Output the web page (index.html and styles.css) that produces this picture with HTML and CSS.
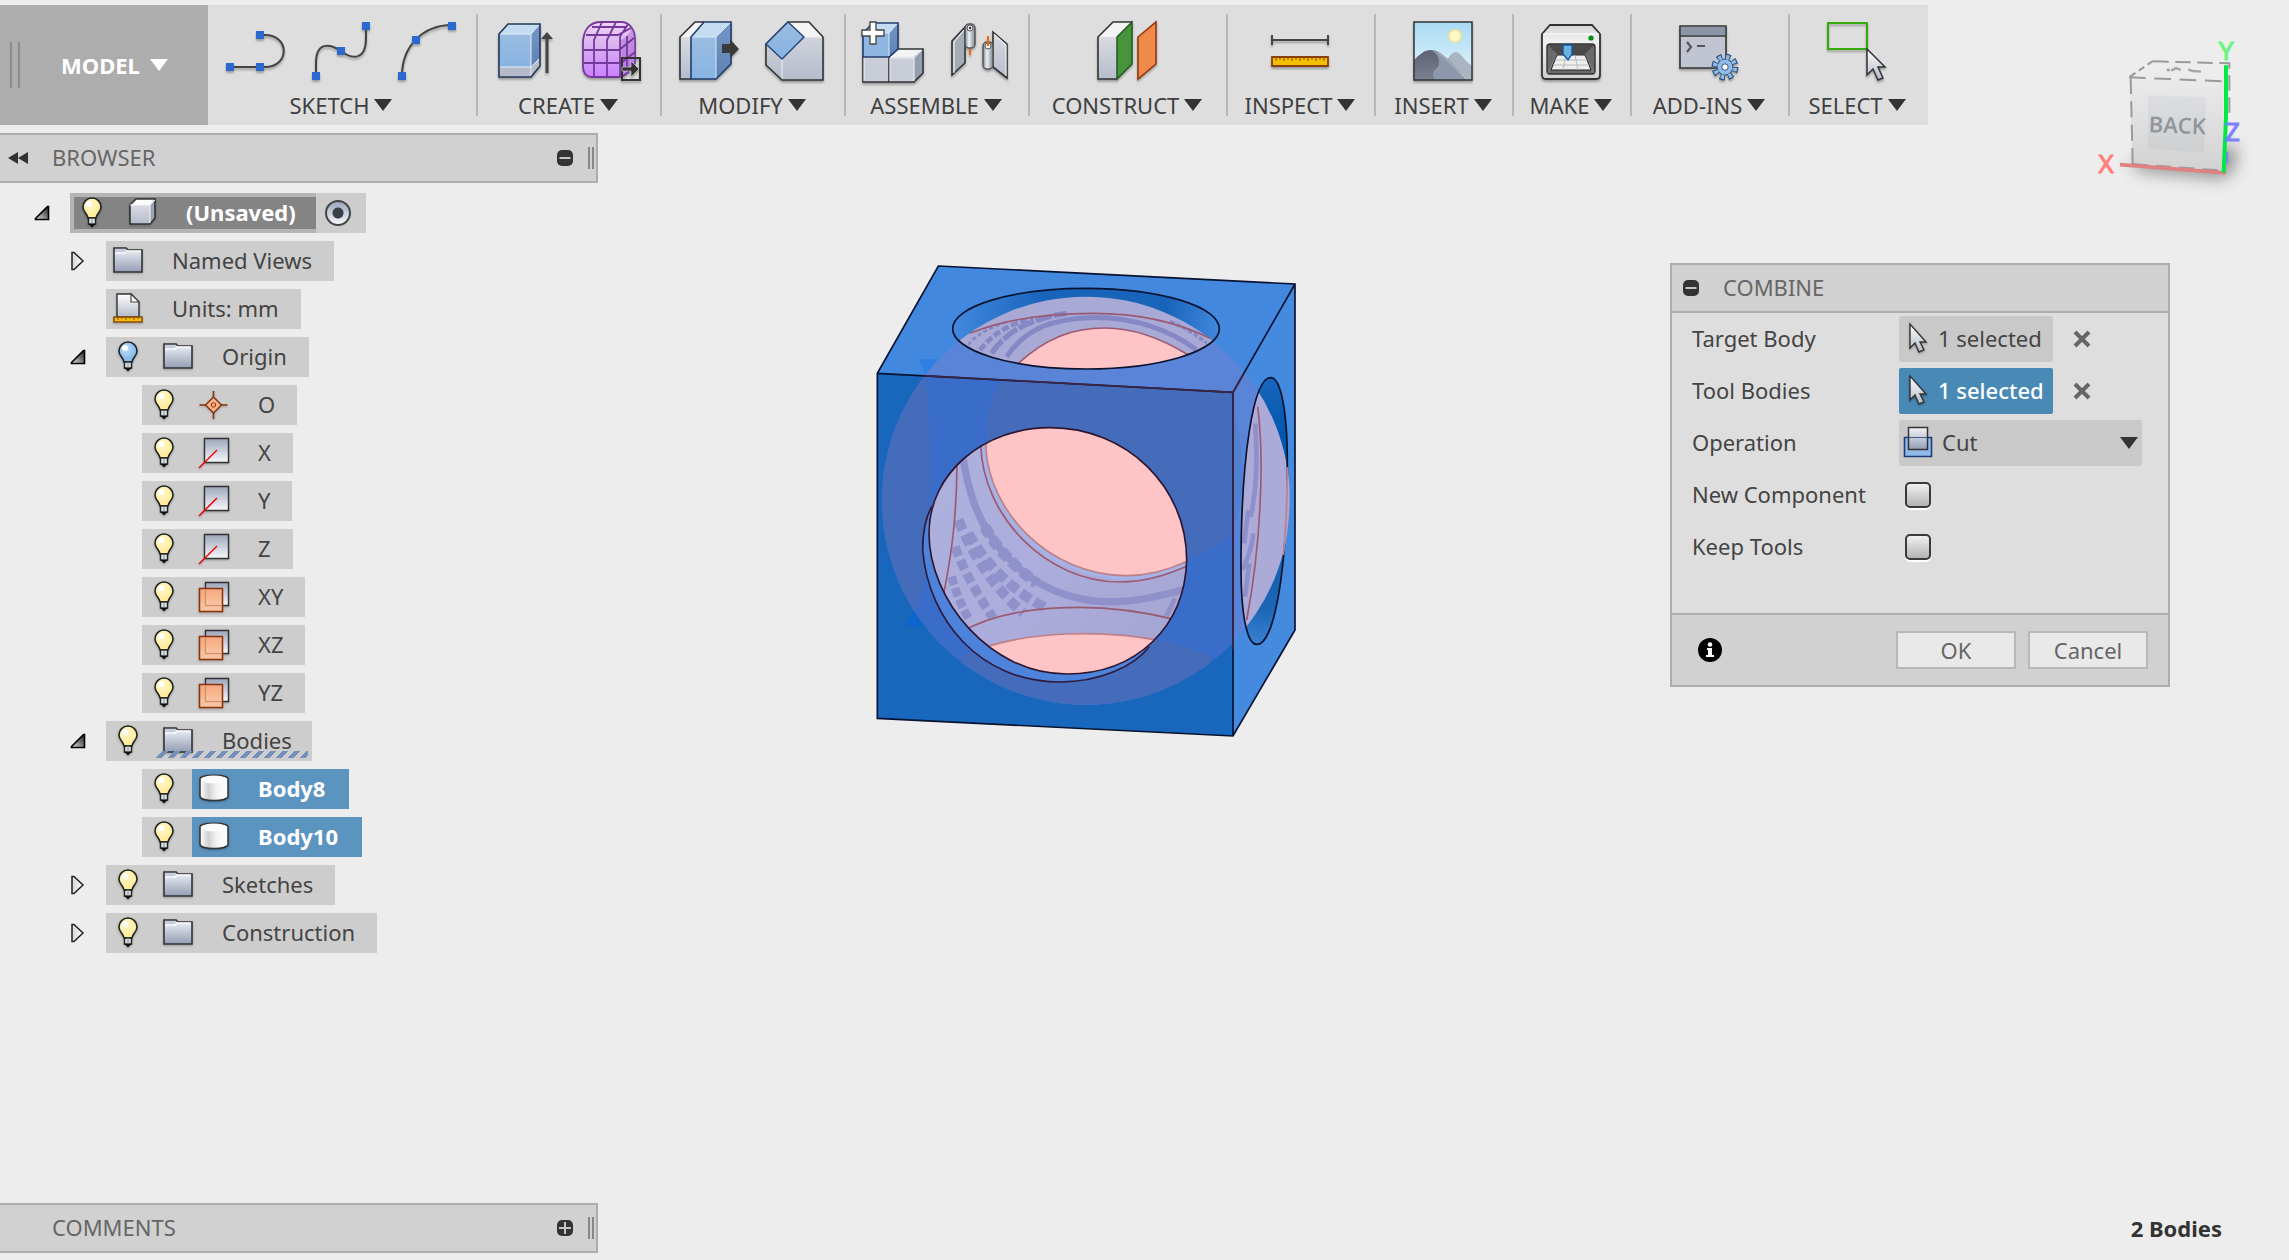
FILE: index.html
```html
<!DOCTYPE html>
<html lang="en">
<head>
  <meta charset="UTF-8" />
  <meta name="viewport" content="width=device-width, initial-scale=1" />
  <title>Combine</title>
  <link rel="stylesheet" href="styles.css">
</head>
<body>
  <!-- shared icons -->
  <svg class="defs" aria-hidden="true">
    <defs>
      <linearGradient id="gSteel" x1="0" y1="0" x2="0" y2="1"><stop offset="0" stop-color="#f2f4f8"/><stop offset="1" stop-color="#939db5"/></linearGradient>
      <linearGradient id="gSteelUp" x1="0" y1="0" x2="0" y2="1"><stop offset="0" stop-color="#9ba5ba"/><stop offset="1" stop-color="#f8f9fc"/></linearGradient>
      <linearGradient id="gCursor" x1="0" y1="0" x2="0" y2="1"><stop offset="0" stop-color="#ffffff"/><stop offset="1" stop-color="#b4bac8"/></linearGradient>
      <linearGradient id="gFront" x1="0" y1="0" x2="0" y2="1"><stop offset="0" stop-color="#d9dbe1"/><stop offset="1" stop-color="#b6bccd"/></linearGradient>
      <linearGradient id="gBlue" x1="0" y1="0" x2="0" y2="1"><stop offset="0" stop-color="#9abde0"/><stop offset="1" stop-color="#87b3e2"/></linearGradient>
      <linearGradient id="gBlueSide" x1="0" y1="0" x2="0" y2="1"><stop offset="0" stop-color="#7597c8"/><stop offset="1" stop-color="#5c81b4"/></linearGradient>
      <linearGradient id="gOrange" x1="0" y1="0" x2="0" y2="1"><stop offset="0" stop-color="#f9a678"/><stop offset="1" stop-color="#fccaa8"/></linearGradient>
      <linearGradient id="gCyl" x1="0" y1="0" x2="1" y2="0"><stop offset="0" stop-color="#ffffff"/><stop offset=".3" stop-color="#cfd0d4"/><stop offset=".6" stop-color="#f4f4f5"/><stop offset="1" stop-color="#ffffff"/></linearGradient>
      <linearGradient id="gPin" x1="0" y1="0" x2="1" y2="0"><stop offset="0" stop-color="#7d8792"/><stop offset=".4" stop-color="#f0f2f5"/><stop offset="1" stop-color="#7d8792"/></linearGradient>
      <linearGradient id="gPurple" x1="0" y1="0" x2="0" y2="1"><stop offset="0" stop-color="#f0d4fb"/><stop offset=".4" stop-color="#d9b4ee"/><stop offset="1" stop-color="#cb80ff"/></linearGradient>
      <linearGradient id="gSky" x1="0" y1="0" x2="0" y2="1"><stop offset="0" stop-color="#a8daf2"/><stop offset="1" stop-color="#e6f6fc"/></linearGradient>
      <linearGradient id="gRock" x1="0" y1="0" x2="0" y2="1"><stop offset="0" stop-color="#5d6271"/><stop offset="1" stop-color="#7b8191"/></linearGradient>
      <linearGradient id="gCase" x1="0" y1="0" x2="0" y2="1"><stop offset="0" stop-color="#d5d5d5"/><stop offset=".3" stop-color="#f1f1f1"/><stop offset="1" stop-color="#cfcfcf"/></linearGradient>
      <linearGradient id="gTwist" x1="0" y1="1" x2="1" y2="0"><stop offset="0" stop-color="#e0e0e0"/><stop offset="1" stop-color="#1c1c1c"/></linearGradient>
      <linearGradient id="gTwistR" x1="0" y1="0" x2="1" y2="0"><stop offset="0" stop-color="#d4d4d4"/><stop offset="1" stop-color="#ffffff"/></linearGradient>
      <radialGradient id="gBulb" cx=".4" cy=".35" r=".7"><stop offset="0" stop-color="#fff6cf"/><stop offset=".6" stop-color="#fff0a4"/><stop offset="1" stop-color="#fde88f"/></radialGradient>
      <radialGradient id="gBulbOff" cx=".4" cy=".35" r=".7"><stop offset="0" stop-color="#c3e0fa"/><stop offset=".6" stop-color="#8fc1ee"/><stop offset="1" stop-color="#82b4e6"/></radialGradient>
    </defs>

    <symbol id="i-bulb" viewBox="0 0 44 40">
      <path d="M18 25C17 20 13 19 13 14a9 9 0 0 1 18 0c0 5-4 6-5 11z" fill="url(#gBulb)" stroke="#222" stroke-width="1.6"/>
      <circle cx="19" cy="11" r="3" fill="#fff"/>
      <path d="M18.5 25h7v6h-7z" fill="#dfe2e8" stroke="#222" stroke-width="1.4"/><path d="M22 25v6" stroke="#888"/>
      <path d="M18.5 31h7L22 34.5z" fill="#111"/>
    </symbol>
    <symbol id="i-bulb-off" viewBox="0 0 44 40">
      <path d="M18 25C17 20 13 19 13 14a9 9 0 0 1 18 0c0 5-4 6-5 11z" fill="url(#gBulbOff)" stroke="#222" stroke-width="1.6"/>
      <circle cx="19" cy="11" r="3" fill="#fff"/>
      <path d="M18.5 25h7v6h-7z" fill="#dfe2e8" stroke="#222" stroke-width="1.4"/><path d="M22 25v6" stroke="#888"/>
      <path d="M18.5 31h7L22 34.5z" fill="#111"/>
    </symbol>
    <symbol id="i-folder" viewBox="0 0 44 40">
      <path d="M8 31V7h12l2 2h14v22z" fill="url(#gSteel)" stroke="#333" stroke-width="1.6"/>
      <path d="M9 8h10l2 2-2 2H9z" fill="#c6cfe2"/><path d="M9 12h10l2-2h14" fill="none" stroke="#f9fafc" stroke-width="1.4"/>
    </symbol>
    <symbol id="i-part" viewBox="0 0 44 40">
      <path d="M10 12l6-6h19l-5 6z" fill="#fbfbfc"/><path d="M30 12l5-6v19l-5 6z" fill="#9aa5b2"/><path d="M10 12h20v19H10z" fill="url(#gFront)"/>
      <path d="M10 12l6-6h19v19l-5 6H10z" fill="none" stroke="#333" stroke-width="1.6"/><path d="M10 12h20v18M30 12l5-5" fill="none" stroke="#f4f5f8"/>
    </symbol>
    <symbol id="i-units" viewBox="0 0 44 40">
      <path d="M11 28V5h14l8 8v15z" fill="url(#gCursor)" stroke="#333" stroke-width="1.4"/><path d="M25 5v8h8z" fill="#fff" stroke="#444" stroke-width="1.2"/>
      <path d="M8 28h28v5H8z" fill="#f2bd0b" stroke="#8a4a08" stroke-width="1.5"/><path d="M12 28v3M16 28v2M20 28v3M24 28v2M28 28v3M32 28v2" stroke="#8a4a08"/>
    </symbol>
    <symbol id="i-origin" viewBox="0 0 44 40">
      <path d="M21.5 6v28M7.5 20h28" stroke="#8a3208" stroke-width="1.6"/><path d="M21.5 12l8 8-8 8-8-8z" fill="#fcb184" stroke="#7a3210" stroke-width="1.3"/>
      <circle cx="21.5" cy="20" r="2.2" fill="none" stroke="#8a3208"/>
    </symbol>
    <symbol id="i-axis" viewBox="0 0 44 40">
      <path d="M12.5 5.5h24v24h-24z" fill="url(#gSteelUp)" stroke="#333" stroke-width="1.4"/><path d="M7 35l18-18" stroke="#f00000" stroke-width="1.5"/>
    </symbol>
    <symbol id="i-plane" viewBox="0 0 44 40">
      <path d="M13.5 5.5h23v23h-23z" fill="url(#gSteelUp)" stroke="#333" stroke-width="1.4"/>
      <path d="M7.5 11.5h23v23h-23z" fill="url(#gOrange)" fill-opacity=".93" stroke="#8a3208" stroke-width="1.5"/><path d="M13.5 12v16.500H30" fill="none" stroke="#c98c66"/>
    </symbol>
    <symbol id="i-body" viewBox="0 0 44 40">
      <path d="M8 10c0-5 28-5 28 0v17c0 6-28 6-28 0z" fill="url(#gCyl)" stroke="#333" stroke-width="1.5"/><ellipse cx="22" cy="10.5" rx="13" ry="4" fill="#fafafa"/>
    </symbol>
    <symbol id="i-open" viewBox="0 0 16 16"><path d="M1.5 14.500v-1l12-12h1v13z" fill="url(#gTwist)" stroke="#000" stroke-width="1.6"/></symbol>
    <symbol id="i-closed" viewBox="0 0 16 20"><path d="M2 1.500h2l9 8.500-9 8.500H2z" fill="url(#gTwistR)" stroke="#222" stroke-width="1.5"/></symbol>
    <symbol id="i-tri" viewBox="0 0 18 12"><path d="M0 0h18L9 12z" fill="currentColor"/></symbol>
    <symbol id="i-minus" viewBox="0 0 16 16"><rect width="16" height="16" rx="5" fill="#333"/><path d="M2.5 8h11" stroke="#c4c4c4" stroke-width="2"/></symbol>
    <symbol id="i-plus" viewBox="0 0 16 16"><rect width="16" height="16" rx="5" fill="#333"/><path d="M2 8h12M8 2v12" stroke="#c4c4c4" stroke-width="2"/></symbol>
    <symbol id="i-cursor" viewBox="0 0 20 32">
      <path d="M2 2v24l5-5 4 9 5-2-4-8h6z" fill="url(#gCursor)" stroke="#333" stroke-width="1.4"/>
    </symbol>
    <symbol id="i-x" viewBox="0 0 18 18"><path d="M2 2l14 14M16 2L2 16" stroke="#666" stroke-width="4"/></symbol>
  </svg>

  <header class="toolbar">
    <button class="workspace"><span class="grip"></span><span>MODEL</span><svg class="tri"><use href="#i-tri"/></svg></button>

    <div class="group">
      <div class="icons">
        <button class="tool" aria-label="Line"><svg viewBox="0 0 64 64">
          <path d="M7 49H42C67 49 67 17 42 17H37" fill="none" stroke="#444" stroke-width="2"/>
          <path d="M3 45h8v8H3zM33 45h8v8h-8zM33 13h8v8h-8z" fill="#2b68d0"/></svg></button>
        <button class="tool" aria-label="Spline"><svg viewBox="0 0 64 64">
          <path d="M7 58V45C7 24 20 25 32 33C44 42 57 42 57 20V8" fill="none" stroke="#444" stroke-width="2"/>
          <path d="M3 54h8v8H3zM28 29h8v8h-8zM53 4h8v8h-8z" fill="#2b68d0"/></svg></button>
        <button class="tool" aria-label="Arc"><svg viewBox="0 0 64 64">
          <path d="M7 58C7 28 28 7 57 7" fill="none" stroke="#444" stroke-width="2"/>
          <path d="M3 54h8v8H3zM17 18h8v8h-8zM53 4h8v8h-8z" fill="#2b68d0"/></svg></button>
      </div>
      <button class="menu">SKETCH<svg class="tri"><use href="#i-tri"/></svg></button>
    </div>

    <div class="group">
      <div class="icons">
        <button class="tool" aria-label="Extrude"><svg viewBox="0 0 64 64">
          <path d="M6 16L15 6h32l-9 10z" fill="#c3dcf2"/><path d="M38 16l9-10v35l-9 10z" fill="url(#gBlueSide)"/><path d="M6 16h32v33H6z" fill="url(#gBlue)"/>
          <path d="M6 49h32v10H6z" fill="#b4bac9"/><path d="M38 49l9-9v8l-9 11z" fill="#b9bdc6"/>
          <path d="M6 49h32l9-9M7 16h31v43M38 16l8-9" fill="none" stroke="#e4eef9"/>
          <path d="M6 16L15 6h32v42l-9 11H6z" fill="none" stroke="#24385c" stroke-width="1.6"/>
          <path d="M54 55V19" stroke="#444" stroke-width="3"/><path d="M48 21l6-7 6 7z" fill="#444"/></svg></button>
        <button class="tool" aria-label="Create form"><svg viewBox="0 0 64 64">
          <path d="M4 26C4 10 12 4 22 4h20c9 0 14 8 14 18v22c0 4-10 15-16 15H14C6 59 4 54 4 48z" fill="url(#gPurple)" stroke="#75399b" stroke-width="1.8"/>
          <path d="M42 22c4-2 9-7 11-12 3 4 3 8 3 14v20c0 4-6 9-13 12z" fill="#a45ccc" opacity=".45"/>
          <path d="M4 32h36l15-12M4 45h38l14-11M7 17h32l13-7M15 58V22L23 4M28 59V22L37 4M41 58V20c0-3 5-8 8-14M48 52V18M13 9h34" fill="none" stroke="#75399b" stroke-width="1.8"/>
          <path d="M43 40h18v22H43z" fill="none" stroke="#333" stroke-width="2"/><path d="M43 49h9v-6l8 8-8 8v-6h-9z" fill="#333" stroke="#ddd" stroke-width=".6"/></svg></button>
      </div>
      <button class="menu">CREATE<svg class="tri"><use href="#i-tri"/></svg></button>
    </div>

    <div class="group">
      <div class="icons">
        <button class="tool" aria-label="Press pull"><svg viewBox="0 0 64 64">
          <path d="M3 19L18 4h9L14 19z" fill="#f4f4f6"/><path d="M3 19h11v42H3z" fill="url(#gFront)"/>
          <path d="M14 19L27 4h27L39 19z" fill="#c3dcf2"/><path d="M14 19h25v42H14z" fill="url(#gBlue)"/><path d="M39 19L54 4v42L39 61z" fill="url(#gBlueSide)"/>
          <path d="M15 19h24v41M39 19L53 5" fill="none" stroke="#d7e8f8"/>
          <path d="M14 61H3V19L18 4h9" fill="none" stroke="#333" stroke-width="1.6"/><path d="M14 61V19L27 4h27v42L39 61z" fill="none" stroke="#1f3d6e" stroke-width="1.6"/>
          <path d="M45 26h8v-5l9 10-9 9v-5h-8z" fill="#3a3a3a"/></svg></button>
        <button class="tool" aria-label="Chamfer"><svg viewBox="0 0 64 64">
          <path d="M25 4h21l14 15v43H19L3 47V26z" fill="url(#gFront)"/><path d="M25 4h21l14 15H41z" fill="#f4f4f6"/>
          <path d="M19 41v20M41 19h18" stroke="#f0f1f5"/>
          <path d="M25 4h21l14 15v43H19L3 47V26z" fill="none" stroke="#333" stroke-width="1.6"/><path d="M25 4l16 15-22 22L3 26z" fill="url(#gBlue)" stroke="#24467c" stroke-width="1.4"/></svg></button>
      </div>
      <button class="menu">MODIFY<svg class="tri"><use href="#i-tri"/></svg></button>
    </div>

    <div class="group">
      <div class="icons">
        <button class="tool" aria-label="New component"><svg viewBox="0 0 64 64">
          <path d="M28 39l9-8h25l-9 8z" fill="#f4f4f6"/><path d="M2 39h51v25H2z" fill="#c9cdd8"/><path d="M53 39l9-8v24l-9 9z" fill="#94a0ae"/>
          <path d="M28 39l9-8h25v24l-9 9H2V39M28 39v25" fill="none" stroke="#333" stroke-width="1.6"/><path d="M29 40h24v23M53 40l8-8M3 40v23M29 40v23" fill="none" stroke="#f2f3f6"/>
          <path d="M2 15L12 5h25L28 15z" fill="#c3dcf2"/><path d="M28 15l9-10v26l-9 8z" fill="url(#gBlueSide)"/><path d="M2 15h26v24H2z" fill="#90b7e4"/>
          <path d="M2 39V15L12 5h25v26l-9 8z" fill="none" stroke="#1f3d6e" stroke-width="1.6"/><path d="M3 15h25v23M28 15l8-9" fill="none" stroke="#d7e8f8"/>
          <path d="M9 4h6v8h8v6h-8v8H9v-8H1v-6h8z" fill="#fff" stroke="#444" stroke-width="1.3"/></svg></button>
        <button class="tool" aria-label="Joint"><svg viewBox="0 0 64 64">
          <path d="M5 57V23L18 9v36z" fill="#a3adb8" stroke="#333" stroke-width="1.6"/><path d="M7 55V24L17 12" fill="none" stroke="#fff"/>
          <path d="M23 30v7" stroke="#f56a00" stroke-width="2"/><rect x="18" y="6" width="10" height="24" rx="4" fill="url(#gPin)" stroke="#555" stroke-width="1.4"/><circle cx="23" cy="10" r="3" fill="#eee" stroke="#555"/><circle cx="23" cy="10" r="1.2" fill="#333"/>
          <path d="M46 14l14 12v34L46 49z" fill="url(#gFront)" stroke="#333" stroke-width="1.6"/><path d="M47 16l12 11v31" fill="none" stroke="#fff"/>
          <rect x="36" y="24" width="10" height="27" rx="4" fill="url(#gPin)" stroke="#555" stroke-width="1.4"/><circle cx="41" cy="28" r="3" fill="#eee" stroke="#555"/><path d="M41 18v10" stroke="#f56a00" stroke-width="2"/></svg></button>
      </div>
      <button class="menu">ASSEMBLE<svg class="tri"><use href="#i-tri"/></svg></button>
    </div>

    <div class="group">
      <div class="icons">
        <button class="tool" aria-label="Offset plane"><svg viewBox="0 0 64 64">
          <path d="M3 19L18 4h19L22 19z" fill="#f4f4f6"/><path d="M3 19h19v42H3z" fill="url(#gFront)"/><path d="M22 19L37 4v42L22 61z" fill="#47943c" stroke="#1f5a1c" stroke-width="1.5"/>
          <path d="M22 61H3V19L18 4h19" fill="none" stroke="#333" stroke-width="1.6"/><path d="M43 19L61 4v42L43 61z" fill="#ef8a4b" stroke="#93380d" stroke-width="1.6"/></svg></button>
      </div>
      <button class="menu">CONSTRUCT<svg class="tri"><use href="#i-tri"/></svg></button>
    </div>

    <div class="group">
      <div class="icons">
        <button class="tool" aria-label="Measure"><svg viewBox="0 0 64 64">
          <path d="M4 22h56M4 17v10M60 17v10" stroke="#444" stroke-width="2"/>
          <path d="M4 39h56v9H4z" fill="#f5c000" stroke="#8a4008" stroke-width="1.8"/><path d="M8 39v4M12 39v3M16 39v4M20 39v3M24 39v4M28 39v3M32 39v4M36 39v3M40 39v4M44 39v3M48 39v4M52 39v3M56 39v4" stroke="#8a4008"/></svg></button>
      </div>
      <button class="menu">INSPECT<svg class="tri"><use href="#i-tri"/></svg></button>
    </div>

    <div class="group">
      <div class="icons">
        <button class="tool" aria-label="Insert image"><svg viewBox="0 0 64 64">
          <path d="M3 4h58v58H3z" fill="url(#gSky)"/><circle cx="44" cy="18" r="6" fill="#fff9c8" stroke="#fbe38c" stroke-width="1.5"/>
          <path d="M34 44c5-6 7-10 11-10s8 8 16 14v14H40z" fill="#a9b5c2"/><path d="M3 42c5-5 10-10 17-10 10 0 20 12 36 30H3z" fill="url(#gRock)"/>
          <path d="M20 32c7 4 10 11 7 17-6 5-6 7-3 13h32C40 44 30 33 20 32z" fill="#8d98ac"/><path d="M28 35c9 7 19 18 28 27" fill="none" stroke="#c5c6c6"/>
          <path d="M3 4h58v58H3z" fill="none" stroke="#333" stroke-width="1.5"/></svg></button>
      </div>
      <button class="menu">INSERT<svg class="tri"><use href="#i-tri"/></svg></button>
    </div>

    <div class="group">
      <div class="icons">
        <button class="tool" aria-label="3D print"><svg viewBox="0 0 64 64">
          <path d="M3 16l8-9h42l8 9v41c0 3-1 4-4 4H7c-3 0-4-1-4-4z" fill="url(#gCase)" stroke="#333" stroke-width="1.8"/><path d="M4 16h56" stroke="#fff"/>
          <circle cx="52" cy="20" r="2.6" fill="#008a10"/><rect x="8" y="26" width="48" height="30" rx="3" fill="#6a6a6a" stroke="#333" stroke-width="1.4"/><path d="M9 27l9 9h28l9-9z" fill="#4a4a4a"/><path d="M9 55l9-19M55 55l-9-19" stroke="#888"/>
          <path d="M18 37h28l6 15H12z" fill="#eee" stroke="#222"/><path d="M16 42h32M14 47h36M27 37l-3 15M36 37l3 15" stroke="#bbb"/>
          <path d="M24 27h9v9l-4 6-5-6z" fill="#6bb3dd" stroke="#0d55a5" stroke-width="1.3"/></svg></button>
      </div>
      <button class="menu">MAKE<svg class="tri"><use href="#i-tri"/></svg></button>
    </div>

    <div class="group">
      <div class="icons">
        <button class="tool" aria-label="Scripts and add-ins"><svg viewBox="0 0 64 64">
          <path d="M3 8h46v42H3z" fill="#c1c5d2" stroke="#333" stroke-width="1.6"/><path d="M4 9h44v8H4z" fill="#8c95a5"/><path d="M3 18h46" stroke="#333" stroke-width="1.4"/>
          <path d="M10 24l4 5-4 5M20 28h8" fill="none" stroke="#555" stroke-width="2.2"/>
          <circle cx="48" cy="49" r="10.5" fill="none" stroke="#2d527f" stroke-width="6" stroke-dasharray="5 3.247"/><circle cx="48" cy="49" r="8" fill="#92bbe6" stroke="#2d527f" stroke-width="1.2"/>
          <circle cx="48" cy="49" r="10" fill="none" stroke="#92bbe6" stroke-width="4.4" stroke-dasharray="3 4.854" stroke-dashoffset="-.9"/><circle cx="48" cy="49" r="3.2" fill="#fff" stroke="#2d527f"/></svg></button>
      </div>
      <button class="menu">ADD-INS<svg class="tri"><use href="#i-tri"/></svg></button>
    </div>

    <div class="group">
      <div class="icons">
        <button class="tool" aria-label="Select"><svg viewBox="0 0 64 64">
          <path d="M3 5h39v26H3z" fill="none" stroke="#35aa0b" stroke-width="2"/>
          <path d="M42 31v26l6-6 5 11 5-2-5-11h7z" fill="url(#gCursor)" stroke="#333" stroke-width="1.5"/></svg></button>
      </div>
      <button class="menu">SELECT<svg class="tri"><use href="#i-tri"/></svg></button>
    </div>
  </header>

  <main class="workarea">
    <aside class="side">
      <div class="bar">
        <button class="collapse" aria-label="Collapse browser"><svg viewBox="0 0 20 12"><path d="M10 0v12L0 6zM20 0v12l-10-6z" fill="#333"/></svg></button>
        <h2>BROWSER</h2>
        <button class="fold" aria-label="Minimize browser"><svg><use href="#i-minus"/></svg></button>
        <span class="handle"></span>
      </div>

      <ul class="tree">
        <li>
          <div class="row">
            <button class="twist" aria-label="Collapse"><svg class="open"><use href="#i-open"/></svg></button>
            <div class="item root">
              <span class="root-name"><button class="bulb" aria-label="Hide"><svg><use href="#i-bulb"/></svg></button><svg class="kind"><use href="#i-part"/></svg><span class="name">(Unsaved)</span></span>
              <input type="radio" name="active" aria-label="Activate component" checked>
            </div>
          </div>
          <ul>
            <li><div class="row">
              <button class="twist" aria-label="Expand"><svg class="closed"><use href="#i-closed"/></svg></button>
              <div class="item"><svg class="kind"><use href="#i-folder"/></svg><span class="name">Named Views</span></div>
            </div></li>
            <li><div class="row leaf">
              <div class="item"><svg class="kind"><use href="#i-units"/></svg><span class="name">Units: mm</span></div>
            </div></li>
            <li>
              <div class="row">
                <button class="twist" aria-label="Collapse"><svg class="open"><use href="#i-open"/></svg></button>
                <div class="item"><button class="bulb" aria-label="Show"><svg><use href="#i-bulb-off"/></svg></button><svg class="kind"><use href="#i-folder"/></svg><span class="name">Origin</span></div>
              </div>
              <ul>
                <li><div class="row leaf"><div class="item"><button class="bulb" aria-label="Hide"><svg><use href="#i-bulb"/></svg></button><svg class="kind"><use href="#i-origin"/></svg><span class="name">O</span></div></div></li>
                <li><div class="row leaf"><div class="item"><button class="bulb" aria-label="Hide"><svg><use href="#i-bulb"/></svg></button><svg class="kind"><use href="#i-axis"/></svg><span class="name">X</span></div></div></li>
                <li><div class="row leaf"><div class="item"><button class="bulb" aria-label="Hide"><svg><use href="#i-bulb"/></svg></button><svg class="kind"><use href="#i-axis"/></svg><span class="name">Y</span></div></div></li>
                <li><div class="row leaf"><div class="item"><button class="bulb" aria-label="Hide"><svg><use href="#i-bulb"/></svg></button><svg class="kind"><use href="#i-axis"/></svg><span class="name">Z</span></div></div></li>
                <li><div class="row leaf"><div class="item"><button class="bulb" aria-label="Hide"><svg><use href="#i-bulb"/></svg></button><svg class="kind"><use href="#i-plane"/></svg><span class="name">XY</span></div></div></li>
                <li><div class="row leaf"><div class="item"><button class="bulb" aria-label="Hide"><svg><use href="#i-bulb"/></svg></button><svg class="kind"><use href="#i-plane"/></svg><span class="name">XZ</span></div></div></li>
                <li><div class="row leaf"><div class="item"><button class="bulb" aria-label="Hide"><svg><use href="#i-bulb"/></svg></button><svg class="kind"><use href="#i-plane"/></svg><span class="name">YZ</span></div></div></li>
              </ul>
            </li>
            <li>
              <div class="row">
                <button class="twist" aria-label="Collapse"><svg class="open"><use href="#i-open"/></svg></button>
                <div class="item hatched"><button class="bulb" aria-label="Hide"><svg><use href="#i-bulb"/></svg></button><svg class="kind"><use href="#i-folder"/></svg><span class="name">Bodies</span></div>
              </div>
              <ul>
                <li><div class="row leaf"><div class="item"><button class="bulb" aria-label="Hide"><svg><use href="#i-bulb"/></svg></button><span class="picked"><svg class="kind"><use href="#i-body"/></svg><span class="name">Body8</span></span></div></div></li>
                <li><div class="row leaf"><div class="item"><button class="bulb" aria-label="Hide"><svg><use href="#i-bulb"/></svg></button><span class="picked"><svg class="kind"><use href="#i-body"/></svg><span class="name">Body10</span></span></div></div></li>
              </ul>
            </li>
            <li><div class="row">
              <button class="twist" aria-label="Expand"><svg class="closed"><use href="#i-closed"/></svg></button>
              <div class="item"><button class="bulb" aria-label="Hide"><svg><use href="#i-bulb"/></svg></button><svg class="kind"><use href="#i-folder"/></svg><span class="name">Sketches</span></div>
            </div></li>
            <li><div class="row">
              <button class="twist" aria-label="Expand"><svg class="closed"><use href="#i-closed"/></svg></button>
              <div class="item"><button class="bulb" aria-label="Hide"><svg><use href="#i-bulb"/></svg></button><svg class="kind"><use href="#i-folder"/></svg><span class="name">Construction</span></div>
            </div></li>
          </ul>
        </li>
      </ul>

      <div class="bar comments">
        <h2>COMMENTS</h2>
        <button class="fold" aria-label="Expand comments"><svg><use href="#i-plus"/></svg></button>
        <span class="handle"></span>
      </div>
    </aside>
    <p class="status">2 Bodies</p>
  </main>

  <!-- 3D model -->
  <svg class="model" viewBox="0 0 1350 1500" role="img" aria-label="Cube with a hollow sphere cut">
    <defs>
      <clipPath id="outline"><path d="M235 48L1305 102V1140L1119 1458L52 1405V370z"/></clipPath>
      <clipPath id="front"><path d="M52 370L1119 427V1458L52 1405z"/></clipPath>
      <clipPath id="ball"><circle cx="678" cy="752" r="612"/></clipPath>
      <clipPath id="holeF"><path d="M570 533C800 533 980 710 980 930C975 1130 830 1272 620 1272C390 1272 207 1050 207 850C207 670 370 533 570 533z"/></clipPath>
      <clipPath id="holeT"><ellipse cx="678" cy="236" rx="400" ry="121"/></clipPath>
      <clipPath id="holeR"><path d="M1232 383C1262 383 1282 480 1282 640C1282 980 1240 1185 1190 1183C1160 1183 1143 1090 1143 950C1143 620 1180 383 1232 383z"/></clipPath>
      <linearGradient id="wallT" x1="0" y1="0" x2="1" y2="0"><stop offset="0" stop-color="#4288df"/><stop offset=".35" stop-color="#1764ba"/><stop offset=".8" stop-color="#1764ba"/><stop offset="1" stop-color="#4288df"/></linearGradient>
      <linearGradient id="wallR" x1="0" y1="0" x2="0" y2="1"><stop offset="0" stop-color="#1a66bd"/><stop offset=".25" stop-color="#0056ac"/><stop offset=".85" stop-color="#1b66b5"/><stop offset="1" stop-color="#4085d8"/></linearGradient>
      <linearGradient id="lav" x1="0" y1="0" x2="1" y2="1"><stop offset="0" stop-color="#adb0dd"/><stop offset=".5" stop-color="#acaddc"/><stop offset="1" stop-color="#a2a3cf"/></linearGradient>
    </defs>
    <path d="M235 48L1305 102L1119 427L52 370z" fill="#4288df"/>
    <path d="M1305 102V1140L1119 1458V427z" fill="#448adf"/>
    <path d="M52 370L1119 427V1458L52 1405z" fill="#1966bd"/>
    <path d="M175 327h60l-40 48z" fill="#2f80e2"/>
    <path d="M132 1125l30-42 30 47z" fill="#0a66cc"/>
    <g clip-path="url(#outline)">
      <circle cx="678" cy="752" r="612" fill="#5984d8"/>
      <g clip-path="url(#front)"><g clip-path="url(#ball)">
        <path d="M0 300h1200v1200H0z" fill="#3a6cc9"/>
        <path d="M0 370H193C220 560 218 860 180 1050L150 1110L0 1080z" fill="#456cbb"/>
        <path d="M378 560C380 480 400 430 425 388L1130 427V842C1090 880 1040 910 970 930L500 800z" fill="#456cbb"/>
        <path d="M260 1240C380 1170 520 1150 680 1150C840 1150 1000 1180 1100 1250V1400H220z" fill="#456cbb"/>
        <path d="M277 1215v47l30-30zM1080 1215v47l-30-30z" fill="#2a68ca"/>
      </g></g>
      <path d="M1119 480C1155 600 1160 740 1119 840z" fill="#5080d0"/>
    </g>

    <!-- top hole -->
    <ellipse cx="678" cy="236" rx="400" ry="121" fill="url(#wallT)"/>
    <g clip-path="url(#holeT)">
      <circle cx="678" cy="752" r="612" fill="#a9a9d6"/>
      <g fill="none" stroke="#8688c6">
        <path d="M440 320C500 230 590 206 690 203C820 200 930 240 1010 300" stroke-width="15"/>
        <path d="M395 310C440 240 520 205 620 190" stroke-width="16" stroke-dasharray="50 6"/>
        <path d="M360 300C400 250 450 220 520 205" stroke-width="14" stroke-dasharray="22 8"/>
        <path d="M325 285C350 250 400 230 440 215" stroke-width="8" stroke-dasharray="12 8"/>
        <path d="M930 215C980 235 1010 255 1040 280" stroke-width="10" stroke-dasharray="14 6"/>
      </g>
      <path d="M475 340C560 262 640 234 735 234C830 234 920 275 985 315L900 380H500z" fill="#ffc4c6"/>
      <path d="M475 340C560 262 640 234 735 234C830 234 920 275 985 315M330 250C440 205 560 190 700 190C840 190 960 220 1050 265" fill="none" stroke="#9c5a72" stroke-width="5"/>
    </g>
    <ellipse cx="678" cy="236" rx="400" ry="121" fill="none" stroke="#0a1330" stroke-width="5"/>

    <!-- right hole -->
    <g clip-path="url(#holeR)">
      <path d="M1130 370h170v830h-170z" fill="url(#wallR)"/>
      <circle cx="678" cy="752" r="612" fill="#acabd8"/>
      <path d="M1186 520C1192 640 1190 720 1172 800M1165 780L1152 880M1180 850C1176 900 1160 930 1148 960M1168 940L1155 1040" fill="none" stroke="#8f8fcb" stroke-width="14"/>
      <path d="M1193 470C1215 640 1200 900 1160 1110" fill="none" stroke="#9c5a72" stroke-width="5"/>
    </g>
    <path d="M1232 383C1262 383 1282 480 1282 640C1282 980 1240 1185 1190 1183C1160 1183 1143 1090 1143 950C1143 620 1180 383 1232 383z" fill="none" stroke="#0a1330" stroke-width="5"/>
    <path d="M1281 652C1292 700 1294 800 1270 915z" fill="#b6a8cf"/>
    <path d="M1282 652C1282 740 1280 830 1270 915" fill="none" stroke="#b98296" stroke-width="5"/>

    <!-- front hole -->
    <path d="M215 770C198 800 188 850 188 900C205 1110 360 1296 600 1296C720 1296 820 1250 868 1190L620 1150L400 900z" fill="#4d83db"/>
    <path d="M215 770C198 800 188 850 188 900C205 1110 360 1296 600 1296C720 1296 820 1250 868 1190" fill="none" stroke="#2e1a3c" stroke-width="5"/>
    <g clip-path="url(#holeF)">
      <path d="M180 500h820v800H180z" fill="url(#lav)"/>
      <g fill="none" stroke="#9090cb">
        <path d="M308 620C325 720 345 780 385 850" stroke-width="22"/>
        <path d="M370 820C430 930 520 1005 620 1035C740 1075 860 1050 985 1015" stroke-width="22"/>
        <path d="M375 830C400 880 450 940 530 1000" stroke-width="34" stroke-dasharray="30 14"/>
        <path d="M325 850C370 930 450 1020 560 1075" stroke-width="30" stroke-dasharray="34 14"/>
        <path d="M295 810C340 920 400 1010 490 1090" stroke-width="30" stroke-dasharray="32 16"/>
        <path d="M285 890C310 960 350 1030 400 1105" stroke-width="28" stroke-dasharray="30 14"/>
        <path d="M275 980C285 1020 305 1070 325 1105" stroke-width="26" stroke-dasharray="26 10"/>
        <path d="M945 1045L918 1100" stroke-width="14"/>
      </g>
      <path d="M378 500V600C390 780 560 975 800 977C870 977 940 955 1000 925V500z" fill="#ffc4c6"/>
      <path d="M372 560V600C384 785 558 982 800 984C870 984 940 962 1000 932" fill="none" stroke="#a4b4e8" stroke-width="9"/>
      <path d="M378 560V600C390 780 560 975 800 977C870 977 940 955 1000 925" fill="none" stroke="#bd8088" stroke-width="5"/>
      <path d="M362 580C366 800 560 996 780 996C860 996 920 975 1000 940M291 640C290 800 275 920 245 1060M300 1148C450 1060 720 1050 950 1110" fill="none" stroke="#9c5a72" stroke-width="5"/>
      <path d="M340 1205C500 1140 740 1140 900 1172L880 1300H400z" fill="#ffc4c6"/><path d="M340 1205C500 1140 740 1140 900 1172" fill="none" stroke="#bd8088" stroke-width="5"/>
    </g>
    <path d="M570 533C800 533 980 710 980 930C975 1130 830 1272 620 1272C390 1272 207 1050 207 850C207 670 370 533 570 533z" fill="none" stroke="#2e1630" stroke-width="5"/>

    <path d="M235 48L1305 102V1140L1119 1458L52 1405V370zM1119 1458V427L1305 102M52 370L1119 427" fill="none" stroke="#061230" stroke-width="5"/>
    <path d="M190 377L1119 427M1119 427V1200M1119 427L1150 373" fill="none" stroke="#3c2444" stroke-width="5"/>
  </svg>

  <!-- view cube -->
  <svg class="viewcube" viewBox="0 0 687 600" role="img" aria-label="View cube">
    <defs>
      <filter id="soft" x="-30%" y="-60%" width="160%" height="220%"><feGaussianBlur stdDeviation="22"/></filter>
      <linearGradient id="vc" x1="0" y1="0" x2="0" y2="1"><stop offset="0" stop-color="#ebebeb"/><stop offset="1" stop-color="#d2d2d2"/></linearGradient>
      <linearGradient id="vcIn" x1="0" y1="0" x2="0" y2="1"><stop offset="0" stop-color="#dcdee1"/><stop offset="1" stop-color="#cdcfd1"/></linearGradient>
    </defs>
    <path d="M215 480L500 440L530 430V500L490 540L230 515z" fill="#888" opacity=".8" filter="url(#soft)"/>
    <path d="M207 232L280 184L508 190L492 244z" fill="#ececec"/>
    <path d="M207 232L490 244V514L218 492z" fill="url(#vc)"/>
    <path d="M264 286L438 292L432 458L264 446z" fill="url(#vcIn)"/>
    <g fill="none" stroke="#9a9a9a" stroke-width="6">
      <path d="M207 232L490 244" stroke-dasharray="50 26"/><path d="M212 234L218 492" stroke-dasharray="48 22"/><path d="M218 492L490 512" stroke-dasharray="46 24"/>
      <path d="M280 184L508 190V350" stroke-dasharray="46 20"/><path d="M210 230L280 182" stroke-dasharray="20 12"/>
    </g>
    <path d="M320 210h10M334 212l14-8 14 6M385 209l14 4 24 2" fill="none" stroke="#a0a4ab" stroke-width="7"/>
    <text class="face" x="351" y="400" transform="rotate(2 351 400)">BACK</text>
    <path d="M180 494L498 519" stroke="#e08080" stroke-width="11"/>
    <path d="M500 490V455" stroke="#8080ff" stroke-width="9"/>
    <path d="M498 196V350L491 518" fill="none" stroke="#00e842" stroke-width="12"/>
    <text class="axis-x" x="138" y="518">X</text>
    <text class="axis-y" x="498" y="180">Y</text>
    <text class="axis-z" x="517" y="422">Z</text>
  </svg>

  <form class="dialog" onsubmit="return false">
    <div class="dialog-head"><button type="button" class="fold" aria-label="Minimize"><svg><use href="#i-minus"/></svg></button><h2>COMBINE</h2></div>
    <div class="dialog-body">
      <div class="field">
        <label for="target">Target Body</label>
        <button type="button" class="pick" id="target"><svg><use href="#i-cursor"/></svg>1 selected</button>
        <button type="button" class="clear" aria-label="Clear target body"><svg><use href="#i-x"/></svg></button>
      </div>
      <div class="field">
        <label for="tools">Tool Bodies</label>
        <button type="button" class="pick active" id="tools"><svg><use href="#i-cursor"/></svg>1 selected</button>
        <button type="button" class="clear" aria-label="Clear tool bodies"><svg><use href="#i-x"/></svg></button>
      </div>
      <div class="field">
        <label for="operation">Operation</label>
        <div class="drop">
          <select id="operation"><option>Join</option><option selected>Cut</option><option>Intersect</option></select>
          <svg class="cut" viewBox="0 0 30 32"><path d="M1.5 11.500h27v19h-27z" fill="#8fb9e6" stroke="#1f3d7a" stroke-width="1.6"/><path d="M5.5 1.500h19v22h-19z" fill="url(#gSteel)" stroke="#333" stroke-width="1.5"/><path d="M6 11.500h18" stroke="#445a80"/></svg>
          <svg class="tri"><use href="#i-tri"/></svg>
        </div>
      </div>
      <div class="field">
        <label for="newcomp">New Component</label>
        <input type="checkbox" id="newcomp">
      </div>
      <div class="field">
        <label for="keep">Keep Tools</label>
        <input type="checkbox" id="keep">
      </div>
    </div>
    <div class="dialog-foot">
      <button type="button" class="info" aria-label="Info"><svg viewBox="0 0 24 24"><circle cx="12" cy="12" r="12" fill="#000"/><circle cx="12" cy="6.5" r="2.3" fill="#fff"/><path d="M9 10h5v7h2v2H8v-2h2v-5H9z" fill="#fff"/></svg></button>
      <button type="submit" class="btn">OK</button>
      <button type="button" class="btn">Cancel</button>
    </div>
  </form>
</body>
</html>
```
FILE: styles.css
```css
* { margin: 0; padding: 0; box-sizing: border-box; }
body {
  font-family: 'Noto Sans', 'Open Sans', sans-serif;
  font-size: 22px;
  line-height: 30px;
  background: #ededed;
  color: #444;
  min-height: 100vh;
  display: flex;
  flex-direction: column;
  position: relative;
}
button, select {
  font: inherit;
  color: inherit;
  background: none;
  border: none;
  cursor: pointer;
}
svg { display: block; }
ul { list-style: none; }
h2 { font-size: 22px; font-weight: normal; color: #666; padding-bottom: 2px; }
.defs { position: absolute; width: 0; height: 0; }
.tri { width: 18px; height: 12px; flex: none; }

/* toolbar */
.toolbar {
  align-self: flex-start;
  height: 120px;
  margin-top: 5px;
  background: #dedede;
  display: grid;
  grid-template-columns: 208px 270px 184px 184px 184px 198px 148px 138px 118px 158px 138px;
}
.workspace {
  display: flex;
  align-items: center;
  gap: 10px;
  padding-left: 10px;
  background: #adadad;
  color: #fff;
  font-weight: bold;
}
.grip {
  width: 10px;
  height: 46px;
  margin-right: 31px;
  border: solid #8c8c8c;
  border-width: 0 2px;
}
.group {
  display: flex;
  flex-direction: column;
  align-items: center;
  gap: 8px;
  padding: 13px 4px 0 0;
  position: relative;
}
.group:not(:last-child)::after {
  content: "";
  position: absolute;
  right: 0;
  top: 9px;
  width: 2px;
  height: 102px;
  background: #b8b8b8;
}
.icons { display: flex; gap: 22px; }
.tool svg {
  width: 64px;
  height: 64px;
  overflow: visible;
  filter: drop-shadow(0 2px 1px rgba(0,0,0,0.3));
}
.menu { display: flex; align-items: center; gap: 5px; color: #404040; white-space: nowrap; }
.menu .tri { color: #333; }

/* browser */
.workarea {
  flex: 1;
  display: flex;
  justify-content: space-between;
  align-items: flex-end;
  padding: 8px 67px 7px 0;
}
.side {
  align-self: stretch;
  width: 598px;
  display: flex;
  flex-direction: column;
}
.bar {
  display: flex;
  align-items: center;
  height: 50px;
  padding: 0 2px 0 8px;
  background: #d1d1d1;
  border: solid #adadad;
  border-width: 2px 2px 2px 0;
}
.bar h2 { flex: 1; }
.collapse svg { width: 20px; height: 12px; margin-right: 24px; }
.comments { margin-top: auto; padding-left: 52px; }
.fold svg { width: 16px; height: 16px; }
.handle {
  width: 6px;
  height: 22px;
  margin-left: 15px;
  border: solid #888;
  border-width: 0 2px;
}
.tree { padding: 10px 0 0 14px; }
.tree ul { padding-left: 36px; }
.row { display: flex; margin-bottom: 8px; }
.leaf { padding-left: 56px; }
.twist { width: 56px; display: grid; place-items: center; }
.open { width: 16px; height: 16px; }
.closed { width: 16px; height: 20px; }
.item {
  display: flex;
  align-items: center;
  height: 40px;
  padding-right: 22px;
  background: #cdcdcd;
  position: relative;
}
.name { padding-bottom: 2px; }
.bulb svg, .kind { width: 44px; height: 40px; filter: drop-shadow(0 1px 1px rgba(0,0,0,0.25)); }
.bulb { margin-right: 6px; }
.kind { margin-right: 22px; }
.root { padding-right: 15px; }
.root-name {
  display: flex;
  align-items: center;
  height: 40px;
  padding-right: 20px;
  margin-right: 9px;
  background: #848484;
  box-shadow: inset 0 4px #b5b5b5, inset 4px -4px #b5b5b5;
  color: #fff;
  font-weight: bold;
}
.root input {
  appearance: none;
  width: 26px;
  height: 26px;
  border: 2px solid #444;
  border-radius: 50%;
  background: radial-gradient(circle, #3a3f48 5px, transparent 6px), linear-gradient(#9ba6bd, #f5f6fa);
}
.picked {
  display: flex;
  align-items: center;
  height: 40px;
  padding-right: 24px;
  margin-right: -22px;
  background: #5b94bf;
  color: #fff;
  font-weight: bold;
}
.hatched { padding-right: 20px; }
.hatched::after {
  content: "";
  position: absolute;
  left: 50px;
  right: 4px;
  bottom: 3px;
  height: 7px;
  background: linear-gradient(135deg, transparent 35%, #7290ba 36% 64%, transparent 65%) 0 0 / 12px 7px;
}
.status { font-weight: bold; color: #333; padding-bottom: 10px; }

/* canvas */
.model { position: absolute; left: 860px; top: 250px; width: 450px; height: 500px; }
.viewcube { position: absolute; right: 0; top: 0; width: 229px; height: 200px; }
.viewcube text { font-family: 'Noto Sans', sans-serif; text-anchor: middle; }
.viewcube .face { font-size: 66px; font-weight: 600; fill: #8f959b; font-family: 'Open Sans', sans-serif; }
.viewcube .axis-x { font-size: 78px; fill: #ff7f7f; stroke: #ff7f7f; stroke-width: 3; }
.viewcube .axis-y { font-size: 78px; fill: #66f57f; stroke: #66f57f; stroke-width: 3; }
.viewcube .axis-z { font-size: 78px; fill: #8080ff; stroke: #8080ff; stroke-width: 3; }

/* combine dialog */
.dialog {
  position: absolute;
  top: 263px;
  right: 119px;
  width: 500px;
  background: #dedede;
  border: 2px solid #adadad;
}
.dialog-head {
  display: flex;
  align-items: center;
  gap: 24px;
  height: 48px;
  padding-left: 11px;
  background: #d1d1d1;
  border-bottom: 2px solid #adadad;
}
.dialog-body {
  display: flex;
  flex-direction: column;
  gap: 6px;
  padding: 3px 26px 43px 20px;
}
.field { display: flex; align-items: center; height: 46px; }
.field label { width: 207px; padding-bottom: 2px; }
.pick {
  display: flex;
  align-items: center;
  gap: 10px;
  width: 154px;
  height: 46px;
  padding: 0 0 2px 9px;
  background: #c9c9c9;
  border-radius: 2px;
  white-space: nowrap;
}
.pick svg { width: 20px; height: 32px; filter: drop-shadow(0 1px 1px rgba(0,0,0,0.3)); }
.active { background: #4989b6; color: #fff; font-weight: 500; }
.clear { margin-left: 20px; }
.clear svg { width: 18px; height: 18px; }
.drop { flex: 1; position: relative; }
.drop select {
  appearance: none;
  display: block;
  width: 100%;
  height: 46px;
  padding: 0 0 2px 43px;
  background: #c9c9c9;
  border-radius: 2px;
}
.drop svg { position: absolute; pointer-events: none; }
.cut { left: 4px; top: 6px; width: 30px; height: 32px; }
.drop .tri { right: 4px; top: 17px; color: #333; }
.field input {
  appearance: none;
  width: 26px;
  height: 26px;
  margin-left: 6px;
  border: 2px solid #3a3a3a;
  border-radius: 5px;
  background: linear-gradient(#f0f0f0, #b4b4b4);
  box-shadow: 0 2px 1px #fff;
}
.dialog-foot {
  display: flex;
  align-items: center;
  gap: 12px;
  height: 72px;
  padding: 0 20px 0 26px;
  background: #d1d1d1;
  border-top: 2px solid #adadad;
}
.info { margin-right: auto; }
.info svg { width: 24px; height: 24px; }
.btn {
  width: 120px;
  height: 38px;
  background: #e9e9e9;
  border: 2px solid #b8b8b8;
  color: #666;
}
```
